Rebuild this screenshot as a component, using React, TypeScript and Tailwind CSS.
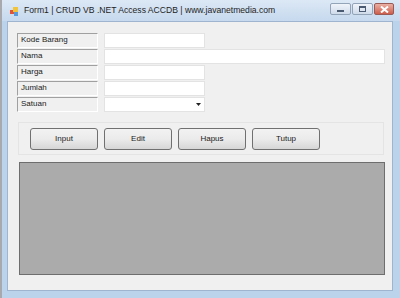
const FONT = { fontFamily: '"Liberation Sans", Arial, sans-serif' };

const FIELDS = [
  { label: 'Kode Barang', width: 'w-[101px]' },
  { label: 'Nama', width: 'w-[281px]' },
  { label: 'Harga', width: 'w-[101px]' },
  { label: 'Jumlah', width: 'w-[101px]' },
];

const BUTTONS = ['Input', 'Edit', 'Hapus', 'Tutup'];

function FieldLabel({ text }: { text: string }) {
  return (
    <div className="w-[81px] h-[15px] border-t border-l border-t-[#a0a0a0] border-l-[#a0a0a0] border-b border-r border-b-white border-r-white bg-[#f0f0f0] pl-[3px] text-[8px] leading-[12px] text-[#1a1a1a]">
      {text}
    </div>
  );
}

function TitleButton({ kind }: { kind: 'min' | 'max' | 'close' }) {
  const isClose = kind === 'close';
  return (
    <div
      className={
        'flex items-center justify-center h-[12px] rounded-[2px] border ' +
        (isClose
          ? 'w-[20px] border-[#9a5a55] bg-gradient-to-b from-[#eab0a4] to-[#cc5d4c]'
          : 'w-[21px] border-[#93a3b8] bg-gradient-to-b from-[#f0f4fa] to-[#cfdbea]')
      }
    >
      {kind === 'min' && <div className="w-[7px] h-[2px] mt-[4px] bg-[#4a5a70]" />}
      {kind === 'max' && <div className="w-[7px] h-[6px] border border-t-2 border-[#4a5a70]" />}
      {kind === 'close' && (
        <svg width="9" height="7" viewBox="0 0 9 7">
          <path d="M1 0.5 L8 6.5 M8 0.5 L1 6.5" stroke="white" strokeWidth="2" />
        </svg>
      )}
    </div>
  );
}

export default function App() {
  return (
    <div className="w-[400px] h-[298px] bg-[#bcd3ec] border-l-2 border-l-[#a7a9ad] flex flex-col" style={FONT}>
      {/* title bar */}
      <div className="h-[21px] flex items-center pl-[8px] pr-[6px] bg-gradient-to-b from-[#dce8f5] to-[#c6d9ee]">
        <svg width="9" height="9" viewBox="0 0 9 9" className="mr-[5px] mt-[1px]">
          <rect x="0" y="3" width="4" height="4" fill="#e0523a" />
          <rect x="3" y="0" width="5" height="5" fill="#f2c43a" />
          <rect x="4" y="5" width="4" height="4" fill="#5a9ad8" />
        </svg>
        <span className="text-[8.6px] text-[#1e1e1e] whitespace-nowrap">
          Form1 | CRUD VB .NET Access ACCDB | www.javanetmedia.com
        </span>
        <div className="ml-auto flex gap-[1px] -mt-[3px]">
          <TitleButton kind="min" />
          <TitleButton kind="max" />
          <TitleButton kind="close" />
        </div>
      </div>

      {/* client area */}
      <div className="flex-1 ml-[5px] mr-[7px] mb-[7px] bg-[#f0f0f0] border border-[#9fb5cf] pl-[9px] pt-[11px] flex flex-col">
        <div className="flex flex-col gap-[1px]">
          {FIELDS.map((f) => (
            <div key={f.label} className="flex items-center gap-[6px]">
              <FieldLabel text={f.label} />
              <div className={f.width + ' h-[15px] bg-white border border-[#e3e3e3]'} />
            </div>
          ))}
          <div className="flex items-center gap-[6px]">
            <FieldLabel text="Satuan" />
            <div className="w-[101px] h-[15px] bg-white border border-[#e3e3e3] flex items-center justify-end pr-[3px]">
              <svg width="5" height="3" viewBox="0 0 5 3">
                <path d="M0 0 H5 L2.5 3 Z" fill="#222" />
              </svg>
            </div>
          </div>
        </div>

        {/* button panel */}
        <div className="mt-[10px] w-[366px] h-[33px] ml-[1px] border border-[#e4e4e4] flex items-center gap-[6px] pl-[11px]">
          {BUTTONS.map((b) => (
            <div
              key={b}
              className="w-[68px] h-[22px] rounded-[3px] border border-[#707070] bg-gradient-to-b from-[#f2f2f2] via-[#ebebeb] to-[#d6d6d6] flex items-center justify-center text-[8px] text-[#1a1a1a]"
            >
              {b}
            </div>
          ))}
        </div>

        {/* data grid */}
        <div className="mt-[7px] ml-[2px] w-[366px] h-[113px] bg-[#ababab] border border-[#6e6e6e]" />
      </div>
    </div>
  );
}
